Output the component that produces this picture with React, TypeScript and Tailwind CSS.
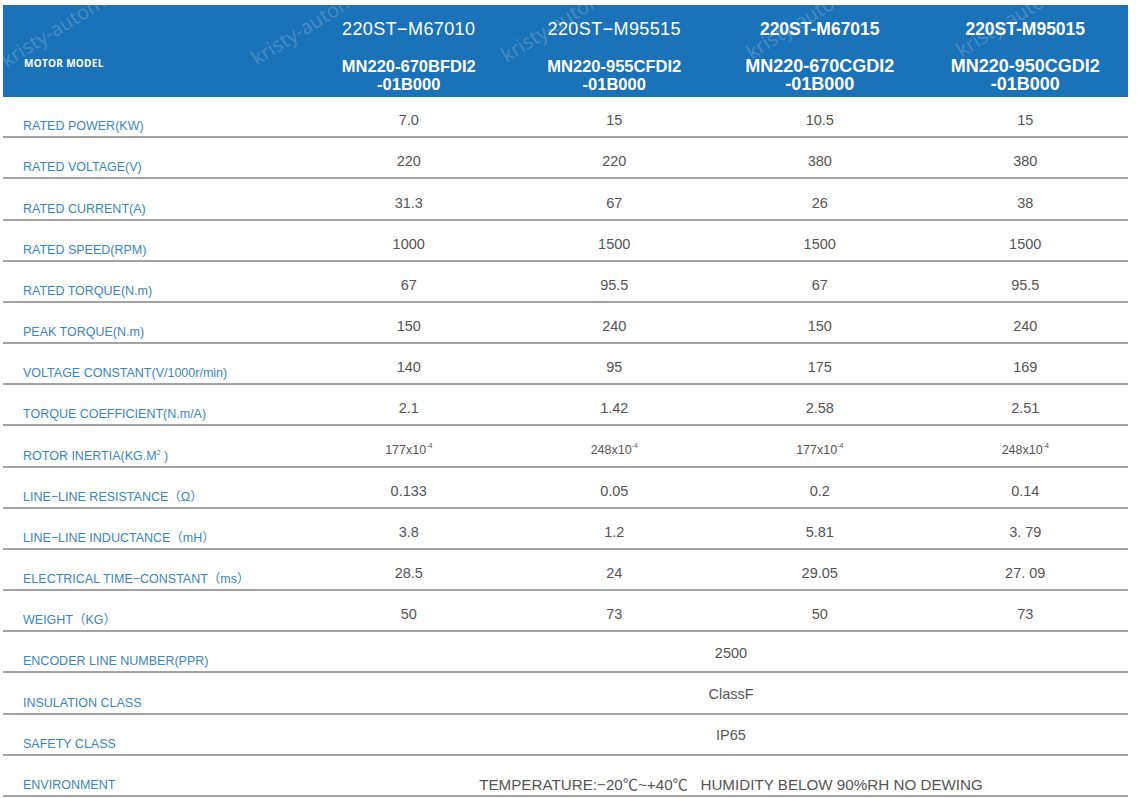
import React from "react";

type Row = { label: React.ReactNode; values?: React.ReactNode[]; merged?: string; bottom?: boolean };

const sup = (base: string) => (
  <span className="text-[12.5px]">
    {base}x10<sup className="text-[7px] relative -top-[6px]">-4</sup>
  </span>
);

const rows: Row[] = [
  { label: "RATED POWER(KW)", values: ["7.0", "15", "10.5", "15"] },
  { label: "RATED VOLTAGE(V)", values: ["220", "220", "380", "380"] },
  { label: "RATED CURRENT(A)", values: ["31.3", "67", "26", "38"] },
  { label: "RATED SPEED(RPM)", values: ["1000", "1500", "1500", "1500"] },
  { label: "RATED TORQUE(N.m)", values: ["67", "95.5", "67", "95.5"] },
  { label: "PEAK TORQUE(N.m)", values: ["150", "240", "150", "240"] },
  { label: "VOLTAGE CONSTANT(V/1000r/min)", values: ["140", "95", "175", "169"] },
  { label: "TORQUE COEFFICIENT(N.m/A)", values: ["2.1", "1.42", "2.58", "2.51"] },
  {
    label: (
      <>
        ROTOR INERTIA(KG.M<sup className="text-[7px] relative -top-[5px]">2</sup> )
      </>
    ),
    values: [sup("177"), sup("248"), sup("177"), sup("248")],
  },
  { label: "LINE−LINE RESISTANCE（Ω）", values: ["0.133", "0.05", "0.2", "0.14"] },
  { label: "LINE−LINE INDUCTANCE（mH）", values: ["3.8", "1.2", "5.81", "3. 79"] },
  { label: "ELECTRICAL TIME−CONSTANT（ms）", values: ["28.5", "24", "29.05", "27. 09"] },
  { label: "WEIGHT（KG）", values: ["50", "73", "50", "73"] },
  { label: "ENCODER LINE NUMBER(PPR)", merged: "2500" },
  { label: "INSULATION CLASS", merged: "ClassF" },
  { label: "SAFETY CLASS", merged: "IP65" },
  {
    label: "ENVIRONMENT",
    merged: "TEMPERATURE:−20℃~+40℃   HUMIDITY BELOW 90%RH NO DEWING",
    bottom: true,
  },
];

const font = { fontFamily: '"Liberation Sans", Arial, "Noto Sans CJK SC", sans-serif' };

const marks = [
  { left: 0, top: 42 },
  { left: 250, top: 40 },
  { left: 500, top: 37 },
  { left: 745, top: 34 },
  { left: 955, top: 32 },
];

export default function App() {
  return (
    <div className="w-[1139px] h-[798px] bg-white overflow-hidden pt-[5px] pl-[3px]" style={font}>
      <div className="w-[1125px]">
        {/* Header */}
        <div className="relative h-[92px] bg-[#1a72b8] grid grid-cols-[303px_repeat(4,1fr)] text-white overflow-hidden">
          <div className="flex items-center pl-[21px] pt-[24px]">
            <span
              className="text-[10px] font-bold tracking-[0.3px]"
              style={{ fontFamily: '"Open Sans", sans-serif' }}
            >
              MOTOR MODEL
            </span>
          </div>
          {[
            ["220ST−M67010", "MN220-670BFDI2", false],
            ["220ST−M95515", "MN220-955CFDI2", false],
            ["220ST-M67015", "MN220-670CGDI2", true],
            ["220ST-M95015", "MN220-950CGDI2", true],
          ].map(([a, b, bold], i) => (
            <div key={i} className="flex flex-col items-center pt-[14px]">
              <div
                className={
                  bold
                    ? "text-[17.5px] font-bold leading-[20px]"
                    : "text-[18px] leading-[20px] tracking-[0.4px]"
                }
              >
                {a}
              </div>
              <div
                className={
                  "mt-[18px] font-bold leading-[18px] text-center " +
                  (bold ? "text-[18px]" : "text-[16.5px]")
                }
              >
                {b}
                <br />
                -01B000
              </div>
            </div>
          ))}
          {marks.map((m, i) => (
            <span
              key={i}
              className="absolute text-[20px] text-white/20 -rotate-[32deg] origin-left whitespace-nowrap pointer-events-none"
              style={{ left: m.left, top: m.top, fontFamily: '"Open Sans", sans-serif' }}
            >
              kristy-automation
            </span>
          ))}
        </div>

        {/* Body */}
        {rows.map((r, i) => (
          <div
            key={i}
            className="grid grid-cols-[303px_repeat(4,1fr)] h-[41.18px] border-b-2 border-[#a3a3a3]"
          >
            <div className="flex items-end pl-[20px] pb-[2px]">
              <span className="text-[12.5px] text-[#3a86c0] leading-[15px] whitespace-nowrap">
                {r.label}
              </span>
            </div>
            {r.values ? (
              r.values.map((v, j) => (
                <div
                  key={j}
                  className="flex items-center justify-center pt-[9px] text-[14.5px] text-[#555555]"
                >
                  {v}
                </div>
              ))
            ) : (
              <div
                className={
                  "col-span-4 flex justify-center pl-[28px] text-[#555555] " +
                  (r.bottom ? "items-end pb-[2px] text-[15.2px]" : "items-center pt-[2px] text-[14.5px]")
                }
              >
                <span className="whitespace-pre leading-[16px]">{r.merged}</span>
              </div>
            )}
          </div>
        ))}
      </div>
    </div>
  );
}
